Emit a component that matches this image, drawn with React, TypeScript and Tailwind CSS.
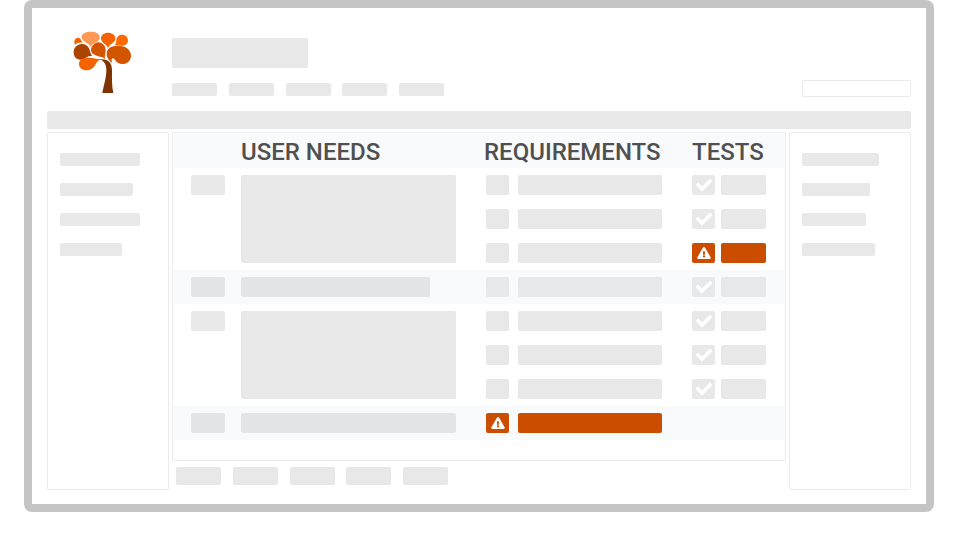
import type { ReactNode } from "react";
import clsx from "clsx";
import { FaCheck, FaExclamationTriangle } from "react-icons/fa";

type Status = "ok" | "alert" | "none";

interface Requirement {
  alert?: boolean;
  test: Status;
}

interface Need {
  wide: boolean;
  shaded: boolean;
  requirements: Requirement[];
}

const needs: Need[] = [
  { wide: true, shaded: false, requirements: [{ test: "ok" }, { test: "ok" }, { test: "alert" }] },
  { wide: false, shaded: true, requirements: [{ test: "ok" }] },
  { wide: true, shaded: false, requirements: [{ test: "ok" }, { test: "ok" }, { test: "ok" }] },
  { wide: true, shaded: true, requirements: [{ alert: true, test: "none" }] },
];

function Bar({ className, children }: { className: string; children?: ReactNode }) {
  return <div className={clsx("rounded-xs", className)}>{children}</div>;
}

function TreeLogo() {
  return (
    <svg viewBox="36 30 180 192" className="h-16 w-[60px]" role="img" aria-label="Logo">
      <path fill="#ff9955" d="M92 82C90 73 83 72 76 67C69 62 65 57 65 51C65 40 77 35 92 35C108 35 119 41 119 51C119 62 112 65 103 70C97 73 94 76 92 82Z" />
      <path fill="#f56200" d="M144 85C142 76 136 75 130 69C125 64 123 60 123 55C123 45 132 38 144 38C157 38 166 45 166 55C166 63 162 67 155 71C149 75 146 78 144 85Z" />
      <path fill="#ff6a00" d="M162 76C170 72 168 66 169 60C170 50 177 44 187 44C197 44 204 51 204 61C204 71 197 77 187 77C178 76 171 75 162 76Z" />
      <path fill="#f56200" d="M45 74C40 62 46 53 54 53C62 53 63 61 68 68C58 67 51 69 45 74Z" />
      <path fill="#aa4400" d="M97 109C90 107 84 109 78 113C72 117 67 119 61 119C49 119 41 110 41 97C41 83 51 72 66 72C76 72 83 77 87 85C91 93 91 103 97 109Z" />
      <path fill="#d45500" d="M135 119C132 111 125 112 112 108C99 104 93 99 93 91C93 79 104 67 115 67C128 67 137 78 137 91C137 100 133 108 135 119Z" />
      <path fill="#d45500" d="M157 129C148 122 140 114 140 101C140 85 153 77 174 77C197 77 213 89 213 107C213 122 202 132 187 132C177 132 169 127 166 121C162 113 157 113 155 118C154 122 156 125 157 129Z" />
      <path fill="#f56200" d="M126 117C116 119 110 126 106 134C100 145 91 151 79 151C66 151 57 143 57 132C57 118 69 113 86 113C102 113 112 118 126 117Z" />
      <path fill="#803300" d="M119 118C142 115 156 127 156 149C156 175 155 198 160 219L127 219C132 192 140 169 139 146C138 130 130 122 119 118Z" />
    </svg>
  );
}

function StatusCell({ alert, icon }: { alert: boolean; icon: boolean }) {
  return (
    <Bar
      className={clsx(
        "flex h-5 w-[23px] shrink-0 items-center justify-center text-white",
        alert ? "bg-[#cb4e00]" : "bg-[#e8e8e8]",
      )}
    >
      {alert && <FaExclamationTriangle className="h-3 w-3.5" aria-label="Problem" />}
      {!alert && icon && <FaCheck className="size-4" stroke="currentColor" strokeWidth={20} aria-label="Passed" />}
    </Bar>
  );
}

function Placeholders({ widths, className }: { widths: string[]; className: string }) {
  return (
    <>
      {widths.map((width, i) => (
        <Bar key={i} className={clsx("bg-[#e8e8e8]", width, className)} />
      ))}
    </>
  );
}

const fiveItems = ["w-[45px]", "w-[45px]", "w-[45px]", "w-[45px]", "w-[45px]"];

export default function App() {
  return (
    <div className="min-h-screen bg-white px-6 font-['Roboto',sans-serif]">
      <div className="rounded-lg bg-[#c5c5c5] p-2">
        <div className="bg-white px-[15px] pb-3.5">
          <header className="flex pt-[22px] pb-[14px]">
            <div className="w-[125px] shrink-0 pl-[25px]">
              <TreeLogo />
            </div>
            <div className="flex flex-1 flex-col gap-[15px] pt-2 pb-px">
              <Bar className="h-[30px] w-[136px] bg-[#e8e8e8]" />
              <nav aria-label="Main" className="flex w-[272px] justify-between">
                <Placeholders widths={fiveItems} className="h-[13px]" />
              </nav>
            </div>
            <input
              type="search"
              aria-label="Search"
              className="h-[17px] w-[109px] self-end rounded-xs border border-[#ebebeb] px-1 text-xs outline-none"
            />
          </header>
          <Bar className="h-[18px] bg-[#e8e8e8]" />

          <div className="mt-[3px] flex gap-[3px]">
            <aside className="flex w-[122px] shrink-0 flex-col gap-[17px] rounded-xs border border-[#ebebeb] px-3 pt-5">
              <Placeholders widths={["w-20", "w-[73px]", "w-20", "w-[62px]"]} className="h-[13px]" />
            </aside>

            <main className="min-w-0 flex-1">
              <div className="rounded-xs border border-[#ebebeb] px-px pt-px pb-5">
                <table className="w-full table-fixed border-collapse">
                  <colgroup>
                    <col className="w-[67px]" />
                    <col />
                    <col className="w-[208px]" />
                    <col className="w-[92px]" />
                  </colgroup>
                  <thead>
                    <tr className="h-[34px] bg-[#f9fafc] text-left text-2xl leading-8 text-[#505050]">
                      <td className="p-0" />
                      <th scope="col" className="px-0 pt-0.5 pb-0 font-medium">USER NEEDS</th>
                      <th scope="col" className="px-0 pt-0.5 pb-0 font-medium">REQUIREMENTS</th>
                      <th scope="col" className="px-0 pt-0.5 pb-0 font-medium">TESTS</th>
                    </tr>
                  </thead>
                  {needs.map((need, n) => {
                    const span = need.requirements.length;
                    const tone = need.shaded ? "bg-[#e4e5e7]" : "bg-[#e8e8e8]";
                    return (
                      <tbody key={n} className={need.shaded ? "bg-[#f9fafc]" : "bg-white"}>
                        {need.requirements.map((req, r) => (
                          <tr key={r} className="h-[34px]">
                            {r === 0 && (
                              <>
                                <td rowSpan={span} className="py-[7px] pr-0 pl-[17px] align-top">
                                  <Bar className={clsx("h-5 w-[34px]", tone)} />
                                </td>
                                <td rowSpan={span} className="py-[7px] pr-7 pl-0 align-top">
                                  <Bar
                                    className={clsx(
                                      span > 1 ? "h-[88px]" : "h-5",
                                      need.wide ? "w-full" : "w-[88%]",
                                      tone,
                                    )}
                                  />
                                </td>
                              </>
                            )}
                            <td className="py-0 pr-0 pl-0.5">
                              <div className="flex gap-[9px]">
                                <StatusCell alert={req.alert === true} icon={false} />
                                <Bar
                                  className={clsx("h-5 w-36", req.alert ? "bg-[#cb4e00]" : "bg-[#e8e8e8]")}
                                />
                              </div>
                            </td>
                            <td className="p-0">
                              {req.test !== "none" && (
                                <div className="flex gap-1.5">
                                  <StatusCell alert={req.test === "alert"} icon />
                                  <Bar
                                    className={clsx(
                                      "h-5 w-[45px]",
                                      req.test === "alert" ? "bg-[#cb4e00]" : "bg-[#e8e8e8]",
                                    )}
                                  />
                                </div>
                              )}
                            </td>
                          </tr>
                        ))}
                      </tbody>
                    );
                  })}
                </table>
              </div>
              <div className="px-1 pt-1.5 pb-[5px]">
                <div className="flex w-[272px] justify-between">
                  <Placeholders widths={fiveItems} className="h-[18px]" />
                </div>
              </div>
            </main>

            <aside className="flex w-[122px] shrink-0 flex-col gap-[17px] rounded-xs border border-[#ebebeb] px-3 pt-5">
              <Placeholders widths={["w-[77px]", "w-[68px]", "w-16", "w-[73px]"]} className="h-[13px]" />
            </aside>
          </div>
        </div>
      </div>
    </div>
  );
}
